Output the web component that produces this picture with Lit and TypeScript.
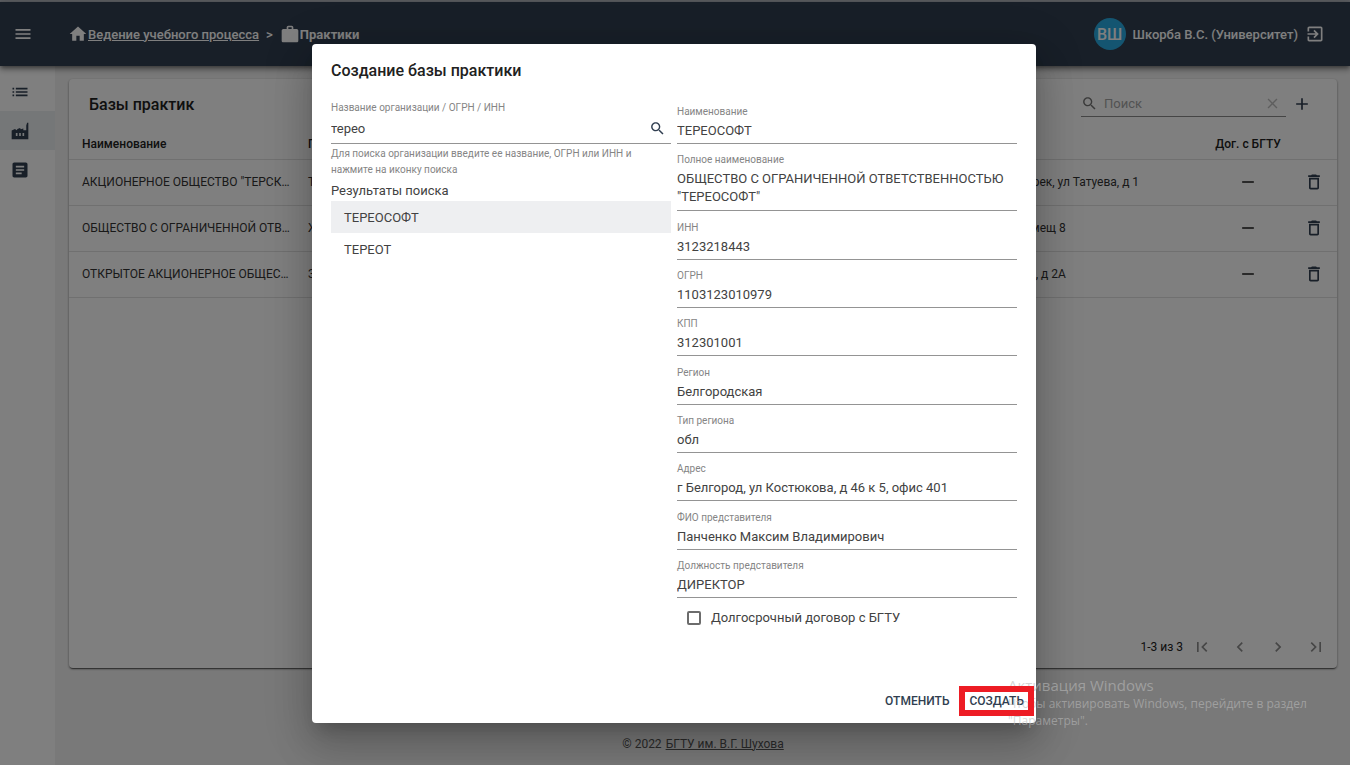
import { LitElement, html, css, svg } from "lit";
import { customElement, property } from "lit/decorators.js";

const ICONS: Record<string, string> = {
  menu: "M3 18h18v-2H3v2zm0-5h18v-2H3v2zm0-7v2h18V6H3z",
  home: "M10 20v-6h4v6h5v-8h3L12 3 2 12h3v8z",
  work: "M10 2h4c1.1 0 2 .9 2 2v2h4c1.1 0 2 .9 2 2v12c0 1.1-.9 2-2 2H4c-1.1 0-2-.9-2-2V8c0-1.1.9-2 2-2h4V4c0-1.1.9-2 2-2zm0 4h4V4h-4z",
  exit: "M10.09 15.59L11.5 17l5-5-5-5-1.41 1.41L12.67 11H3v2h9.67l-2.58 2.59zM19 3H5c-1.11 0-2 .9-2 2v4h2V5h14v14H5v-4H3v4c0 1.1.89 2 2 2h14c1.1 0 2-.9 2-2V5c0-1.1-.9-2-2-2z",
  list: "M3 13h2v-2H3v2zm0 4h2v-2H3v2zm0-8h2V7H3v2zm4 4h14v-2H7v2zm0 4h14v-2H7v2zM7 7v2h14V7H7z",
  factory: "M2 22V11.500l4-2 2 1.500 1-1.500 3-1 1 1.500 3-1v2h3.500V5.500l1-3.500H22v20zM7 14.500v3.500h2v-3.500zm4 0v3.500h2v-3.500zm4 0v3.500h2v-3.500z",
  article: "M19 3H5c-1.100 0-2 .9-2 2v14c0 1.100.9 2 2 2h14c1.100 0 2-.9 2-2V5c0-1.100-.9-2-2-2zm-5 14H7v-2h7v2zm3-4H7v-2h10v2zm0-4H7V7h10v2z",
  search: "M15.500 14h-.79l-.28-.27C15.410 12.590 16 11.110 16 9.500 16 5.910 13.090 3 9.500 3S3 5.910 3 9.500 5.910 16 9.500 16c1.610 0 3.090-.59 4.230-1.570l.27.28v.79l5 4.990L20.490 19l-4.990-5zm-6 0C7.010 14 5 11.990 5 9.500S7.010 5 9.500 5 14 7.010 14 9.500 11.990 14 9.500 14z",
  clear: "M19 6.410L17.590 5 12 10.590 6.410 5 5 6.410 10.590 12 5 17.590 6.410 19 12 13.410 17.590 19 19 17.590 13.410 12z",
  add: "M19 13h-6v6h-2v-6H5v-2h6V5h2v6h6v2z",
  minus: "M19 13H5v-2h14v2z",
  trash: "M6 19c0 1.100.9 2 2 2h8c1.100 0 2-.9 2-2V7H6v12zM8 9h8v10H8V9zm7.500-5l-1-1h-5l-1 1H5v2h14V4z",
  first: "M18.410 16.590L13.820 12l4.590-4.590L17 6l-6 6 6 6zM6 6h2v12H6z",
  prev: "M15.410 7.410L14 6l-6 6 6 6 1.410-1.410L10.830 12z",
  next: "M10 6L8.590 7.410 13.170 12l-4.580 4.590L10 18l6-6z",
  last: "M5.590 7.410L10.180 12l-4.590 4.590L7 18l6-6-6-6zM16 6h2v12h-2z",
};

@customElement("app-icon")
class AppIcon extends LitElement {
  @property() name = "";
  static styles = css`
    :host { display: inline-flex; width: 20px; height: 20px; flex: none; }
    svg { width: 100%; height: 100%; fill: currentColor; }
  `;
  render() {
    return html`<svg viewBox="0 0 24 24" aria-hidden="true">${svg`<path fill-rule="evenodd" d=${ICONS[this.name]}></path>`}</svg>`;
  }
}

interface Field { id: string; label: string; value: string; long?: boolean; }

const FIELDS: Field[] = [
  { id: "name", label: "Наименование", value: "ТЕРЕОСОФТ" },
  { id: "full", label: "Полное наименование", value: "ОБЩЕСТВО С ОГРАНИЧЕННОЙ ОТВЕТСТВЕННОСТЬЮ \"ТЕРЕОСОФТ\"", long: true },
  { id: "inn", label: "ИНН", value: "3123218443" },
  { id: "ogrn", label: "ОГРН", value: "1103123010979" },
  { id: "kpp", label: "КПП", value: "312301001" },
  { id: "region", label: "Регион", value: "Белгородская" },
  { id: "rtype", label: "Тип региона", value: "обл" },
  { id: "address", label: "Адрес", value: "г Белгород, ул Костюкова, д 46 к 5, офис 401" },
  { id: "person", label: "ФИО представителя", value: "Панченко Максим Владимирович" },
  { id: "post", label: "Должность представителя", value: "ДИРЕКТОР" },
];

const ROWS = [
  { name: "АКЦИОНЕРНОЕ ОБЩЕСТВО \"ТЕРСК…", full: "ТЕРЕК", address: "гп Терек, ул Татуева, д 1" },
  { name: "ОБЩЕСТВО С ОГРАНИЧЕННОЙ ОТВ…", full: "ЖБК", address: "8, помещ 8" },
  { name: "ОТКРЫТОЕ АКЦИОНЕРНОЕ ОБЩЕС…", full: "ЗАВОД", address: "Мира, д 2А" },
];

@customElement("app-root")
class AppRoot extends LitElement {
  static styles = css`
    :host {
      display: block;
      position: relative;
      min-height: 100vh;
      font-family: Roboto, "Noto Sans", sans-serif;
      font-size: 13px;
      color: #212121;
    }
    * { box-sizing: border-box; }
    button, input, textarea { font: inherit; color: inherit; background: none; border: 0; padding: 0; margin: 0; outline: 0; border-radius: 0; }
    button { display: inline-flex; align-items: center; justify-content: center; cursor: pointer; }
    a { color: inherit; }
    h1, h2, p, ul { margin: 0; padding: 0; list-style: none; }
    .page { display: flex; flex-direction: column; min-height: 100vh; background: #f3f3f3; border-top: 2px solid #5c5e62; }
    .topbar {
      display: flex; align-items: center; height: 64px; padding: 0 25px 0 13px;
      background: #303e50; color: #fff; font-weight: 500; position: relative;
      box-shadow: 0 2px 4px -1px rgba(0,0,0,.4), 0 4px 5px rgba(0,0,0,.2), 0 1px 10px rgba(0,0,0,.2);
    }
    .crumbs { display: flex; align-items: center; flex: 1; margin-left: 35px; }
    .crumbs .sep { padding: 0 7px; }
    .crumbs b { font-weight: 700; }
    .user { display: flex; align-items: center; gap: 7px; }
    .avatar { display: grid; place-items: center; width: 32px; height: 32px; border-radius: 50%; background: #29abe2; font-size: 16px; }
    .body { display: flex; flex: 1; }
    .side { width: 55px; background: #fff; padding-top: 6px; display: flex; flex-direction: column; }
    .side a { display: flex; align-items: center; height: 39px; padding-left: 10px; color: #303e50; }
    .side a.on { background: #ebeef0; }
    .main { flex: 1; min-width: 0; display: flex; flex-direction: column; padding: 13px 13px 0 14px; }
    .card { flex: 1; display: flex; flex-direction: column; background: #fff; border-radius: 4px; box-shadow: 0 2px 1px -1px rgba(0,0,0,.4), 0 1px 2px rgba(0,0,0,.3), 0 1px 3px rgba(0,0,0,.2); }
    .tools { display: flex; align-items: center; height: 50px; padding: 0 25px 0 20px; }
    .tools h1 { flex: 1; font-size: 16px; font-weight: 500; }
    .search { display: flex; align-items: center; width: 205px; height: 26px; border-bottom: 1px solid #8a8a8a; color: #757575; margin-right: 6px; }
    .search app-icon { width: 17px; height: 17px; }
    .search input { flex: 1; min-width: 0; margin-left: 6px; }
    .search input::placeholder { color: #a5a5a5; opacity: 1; }
    .search button { width: 28px; color: #bdbdbd; }
    .dark { color: #303e50; }
    table { width: 100%; table-layout: fixed; border-collapse: collapse; font-size: 12px; }
    th, td { text-align: left; padding: 0 13px; border-bottom: 1px solid #e0e0e0; white-space: nowrap; }
    th { height: 30px; font-weight: 500; }
    td { height: 46px; color: #333; }
    .c1 { width: 226px; } .c3 { width: 213px; } .c4 { width: 86px; } .c5 { width: 46px; }
    th.mid, td.mid, td.act { padding: 0; text-align: center; }
    td app-icon, td button { vertical-align: middle; }
    .pager { display: flex; align-items: center; justify-content: flex-end; height: 42px; margin-top: auto; padding-right: 2px; font-size: 12px; }
    .pager button { width: 38px; color: #8d8d8d; }
    .foot { display: flex; align-items: center; justify-content: center; gap: 4px; height: 97px; padding-top: 54px; font-size: 12px; color: #555; }
    .backdrop { position: absolute; inset: 2px 0 0 0; padding-right: 2px; background: rgba(0,0,0,.5); display: flex; align-items: center; justify-content: center; }
    .dialog {
      display: flex; flex-direction: column; width: 724px; max-width: 96%; background: #fff; border-radius: 4px; padding: 17px 19px 7px; color: #424242;
      box-shadow: 0 11px 15px -7px rgba(0,0,0,.2), 0 24px 38px 3px rgba(0,0,0,.14), 0 9px 46px 8px rgba(0,0,0,.12);
    }
    .dialog h2 { font-size: 16px; line-height: 20px; font-weight: 500; color: #212121; }
    .cols { display: grid; grid-template-columns: 1fr 1fr; gap: 6px; min-height: 605px; }
    .left { padding-top: 20px; }
    .right { padding-top: 24px; display: flex; flex-direction: column; }
    .fields { display: flex; flex-direction: column; justify-content: space-between; min-height: 493px; }
    .field { display: flex; flex-direction: column; border-bottom: 1px solid #949494; }
    .field label { font-size: 10px; line-height: 13px; color: #858585; }
    .field input, .field textarea { display: block; width: 100%; line-height: 18px; height: 18px; resize: none; overflow: hidden; }
    .right .field { height: 39px; gap: 4px; }
    .right .field.long { height: 58px; }
    .field textarea { height: 36px; }
    .find { display: flex; align-items: center; height: 29px; }
    .find button { width: 30px; height: 28px; }
    .find app-icon { width: 17px; height: 17px; }
    .hint { font-size: 10px; line-height: 16px; color: #858585; padding-top: 2px; }
    .found { line-height: 20px; padding-top: 3px; }
    .results button { width: 100%; height: 32px; padding: 0 13px; justify-content: flex-start; }
    .results button.on { background: #eeeff1; }
    .tick { display: flex; align-items: center; gap: 10px; padding: 12px 0 0 10px; }
    .tick input { appearance: none; width: 14px; height: 14px; border: 2px solid #6c6c6c; border-radius: 2px; }
    .actions { display: flex; justify-content: flex-end; align-items: center; height: 30px; margin: auto -17px 0 0; font-size: 12px; font-weight: 500; }
    .actions button { position: relative; height: 30px; padding: 0 10px; color: #303e50; }
    .marked::after { content: ""; position: absolute; z-index: 3; inset: 0; border: 6px solid #ed1c24; }
    .notice { position: absolute; z-index: 2; right: 40px; bottom: 36px; width: 302px; color: rgba(185,185,185,.6); font-family: "Open Sans", "Noto Sans", sans-serif; font-size: 12px; line-height: 17px; pointer-events: none; }
    .notice strong { display: block; font-weight: 400; font-size: 15px; line-height: 20px; }
  `;

  render() {
    return html`
      <div class="page">
        <header class="topbar">
          <button aria-label="Меню"><app-icon name="menu"></app-icon></button>
          <nav class="crumbs">
            <app-icon name="home"></app-icon><a href="#">Ведение учебного процесса</a>
            <span class="sep">&gt;</span>
            <app-icon name="work"></app-icon><b>Практики</b>
          </nav>
          <div class="user">
            <span class="avatar">ВШ</span><span>Шкорба В.С. (Университет)</span>
            <button aria-label="Выход"><app-icon name="exit"></app-icon></button>
          </div>
        </header>
        <div class="body">
          <nav class="side">
            <a href="#" aria-label="Список"><app-icon name="list"></app-icon></a>
            <a href="#" class="on" aria-label="Базы практик"><app-icon name="factory"></app-icon></a>
            <a href="#" aria-label="Документы"><app-icon name="article"></app-icon></a>
          </nav>
          <main class="main">
            <section class="card">
              <div class="tools">
                <h1>Базы практик</h1>
                <div class="search">
                  <app-icon name="search"></app-icon>
                  <input type="text" placeholder="Поиск" aria-label="Поиск">
                  <button aria-label="Очистить"><app-icon name="clear"></app-icon></button>
                </div>
                <button class="dark" aria-label="Добавить"><app-icon name="add"></app-icon></button>
              </div>
              <table>
                <colgroup><col class="c1"><col><col class="c3"><col class="c4"><col class="c5"></colgroup>
                <thead><tr><th>Наименование</th><th>Полное наименование</th><th></th><th class="mid">Дог. с БГТУ</th><th></th></tr></thead>
                <tbody>
                  ${ROWS.map((r) => html`<tr>
                    <td>${r.name}</td><td>${r.full}</td><td>${r.address}</td>
                    <td class="mid"><app-icon name="minus"></app-icon></td>
                    <td class="act"><button class="dark" aria-label="Удалить"><app-icon name="trash"></app-icon></button></td>
                  </tr>`)}
                </tbody>
              </table>
              <div class="pager">
                <span>1-3 из 3</span>
                ${["first", "prev", "next", "last"].map((n) => html`<button aria-label=${n}><app-icon name=${n}></app-icon></button>`)}
              </div>
            </section>
            <footer class="foot"><span>© 2022</span><a href="#">БГТУ им. В.Г. Шухова</a></footer>
          </main>
        </div>
      </div>
      <div class="backdrop">
        <div class="dialog" role="dialog" aria-modal="true" aria-labelledby="title">
          <h2 id="title">Создание базы практики</h2>
          <div class="cols">
            <div class="left">
              <div class="field">
                <label for="query">Название организации / ОГРН / ИНН</label>
                <div class="find">
                  <input id="query" type="text" .value=${"терео"}>
                  <button class="dark" aria-label="Найти"><app-icon name="search"></app-icon></button>
                </div>
              </div>
              <p class="hint">Для поиска организации введите ее название, ОГРН или ИНН и нажмите на иконку поиска</p>
              <p class="found">Результаты поиска</p>
              <ul class="results">
                <li><button class="on">ТЕРЕОСОФТ</button></li>
                <li><button>ТЕРЕОТ</button></li>
              </ul>
            </div>
            <div class="right">
              <div class="fields">
                ${FIELDS.map((f) => html`<div class="field ${f.long ? "long" : ""}">
                  <label for=${f.id}>${f.label}</label>
                  ${f.long
                    ? html`<textarea id=${f.id} rows="2" .value=${f.value}></textarea>`
                    : html`<input id=${f.id} type="text" .value=${f.value}>`}
                </div>`)}
              </div>
              <div class="tick"><input id="longterm" type="checkbox"><label for="longterm">Долгосрочный договор с БГТУ</label></div>
            </div>
          </div>
          <div class="actions">
            <button>ОТМЕНИТЬ</button>
            <button class="marked">СОЗДАТЬ</button>
          </div>
        </div>
      </div>
      <aside class="notice"><strong>Активация Windows</strong>Чтобы активировать Windows, перейдите в раздел "Параметры".</aside>
    `;
  }
}
